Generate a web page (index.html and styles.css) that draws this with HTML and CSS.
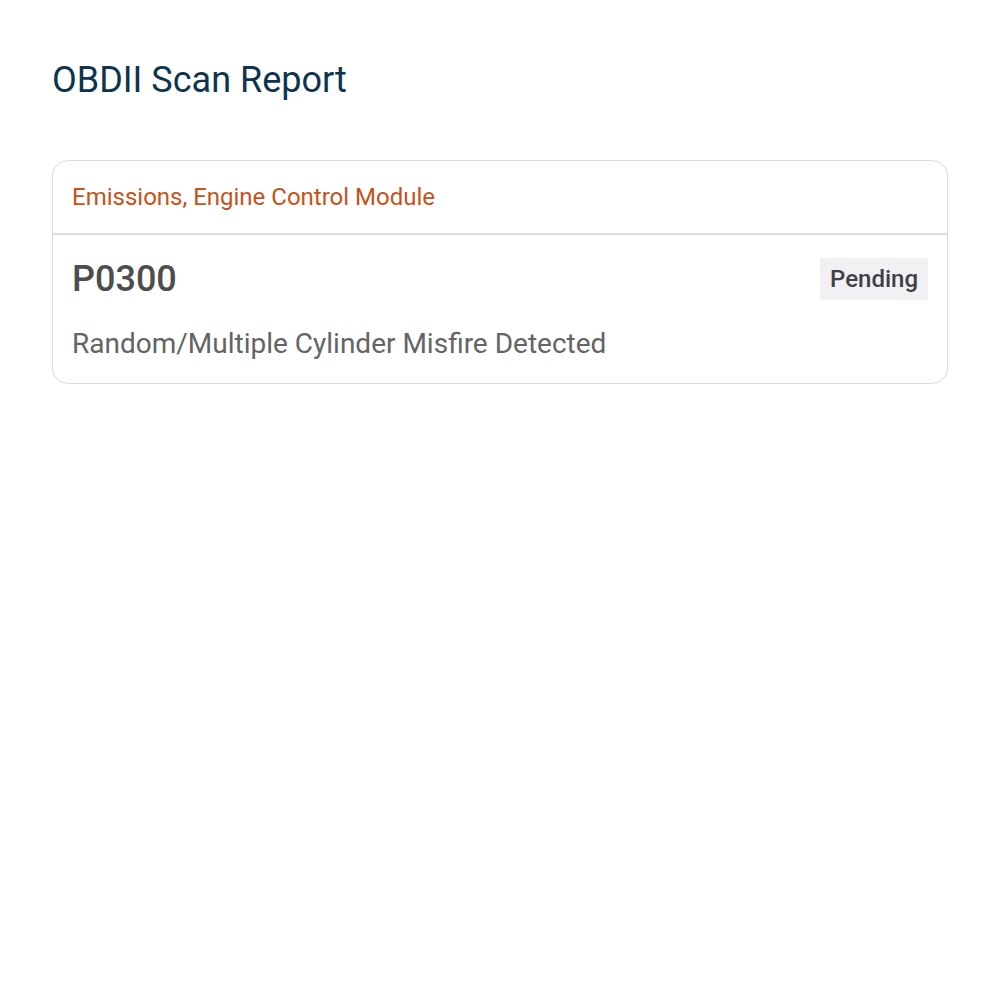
FILE: index.html
```html
<!DOCTYPE html>
<html lang="en">
<head>
<meta charset="utf-8">
<title>OBDII Scan Report</title>
<link rel="stylesheet" href="styles.css">
</head>
<body>
<main class="report">
  <h1 class="report-title">OBDII Scan Report</h1>
  <section class="dtc-card">
    <header class="dtc-card__header">Emissions, Engine Control Module</header>
    <div class="dtc-card__body">
      <div class="dtc-row">
        <span class="dtc-code">P0300</span>
        <span class="dtc-status">Pending</span>
      </div>
      <p class="dtc-desc">Random/Multiple Cylinder Misfire Detected</p>
    </div>
  </section>
</main>
</body>
</html>
```

FILE: styles.css
```css
html, body {
  margin: 0;
  padding: 0;
  background: #ffffff;
}

body {
  font-family: Roboto, "Liberation Sans", sans-serif;
}

.report {
  padding: 56px 52px;
}

.report-title {
  margin: 0 0 56px;
  font-size: 36px;
  font-weight: 400;
  line-height: 48px;
  color: #0d3550;
}

.dtc-card {
  border: 1px solid #dcdcdc;
  border-radius: 16px;
  overflow: hidden;
}

.dtc-card__header {
  padding: 0 19px;
  height: 74px;
  box-sizing: border-box;
  display: flex;
  align-items: center;
  font-size: 24px;
  color: #c4531a;
  border-bottom: 2px solid #dcdcdc;
}

.dtc-card__body {
  padding: 23px 19px 23px;
}

.dtc-row {
  display: flex;
  justify-content: space-between;
  align-items: center;
}

.dtc-code {
  font-size: 36px;
  font-weight: 500;
  color: #4d4d4d;
}

.dtc-status {
  background: #f1f1f4;
  color: #3f3f46;
  font-size: 24px;
  font-weight: 500;
  line-height: 28px;
  padding: 7px 10px;
}

.dtc-desc {
  margin: 27px 0 0;
  font-size: 28px;
  color: #646464;
}
```
